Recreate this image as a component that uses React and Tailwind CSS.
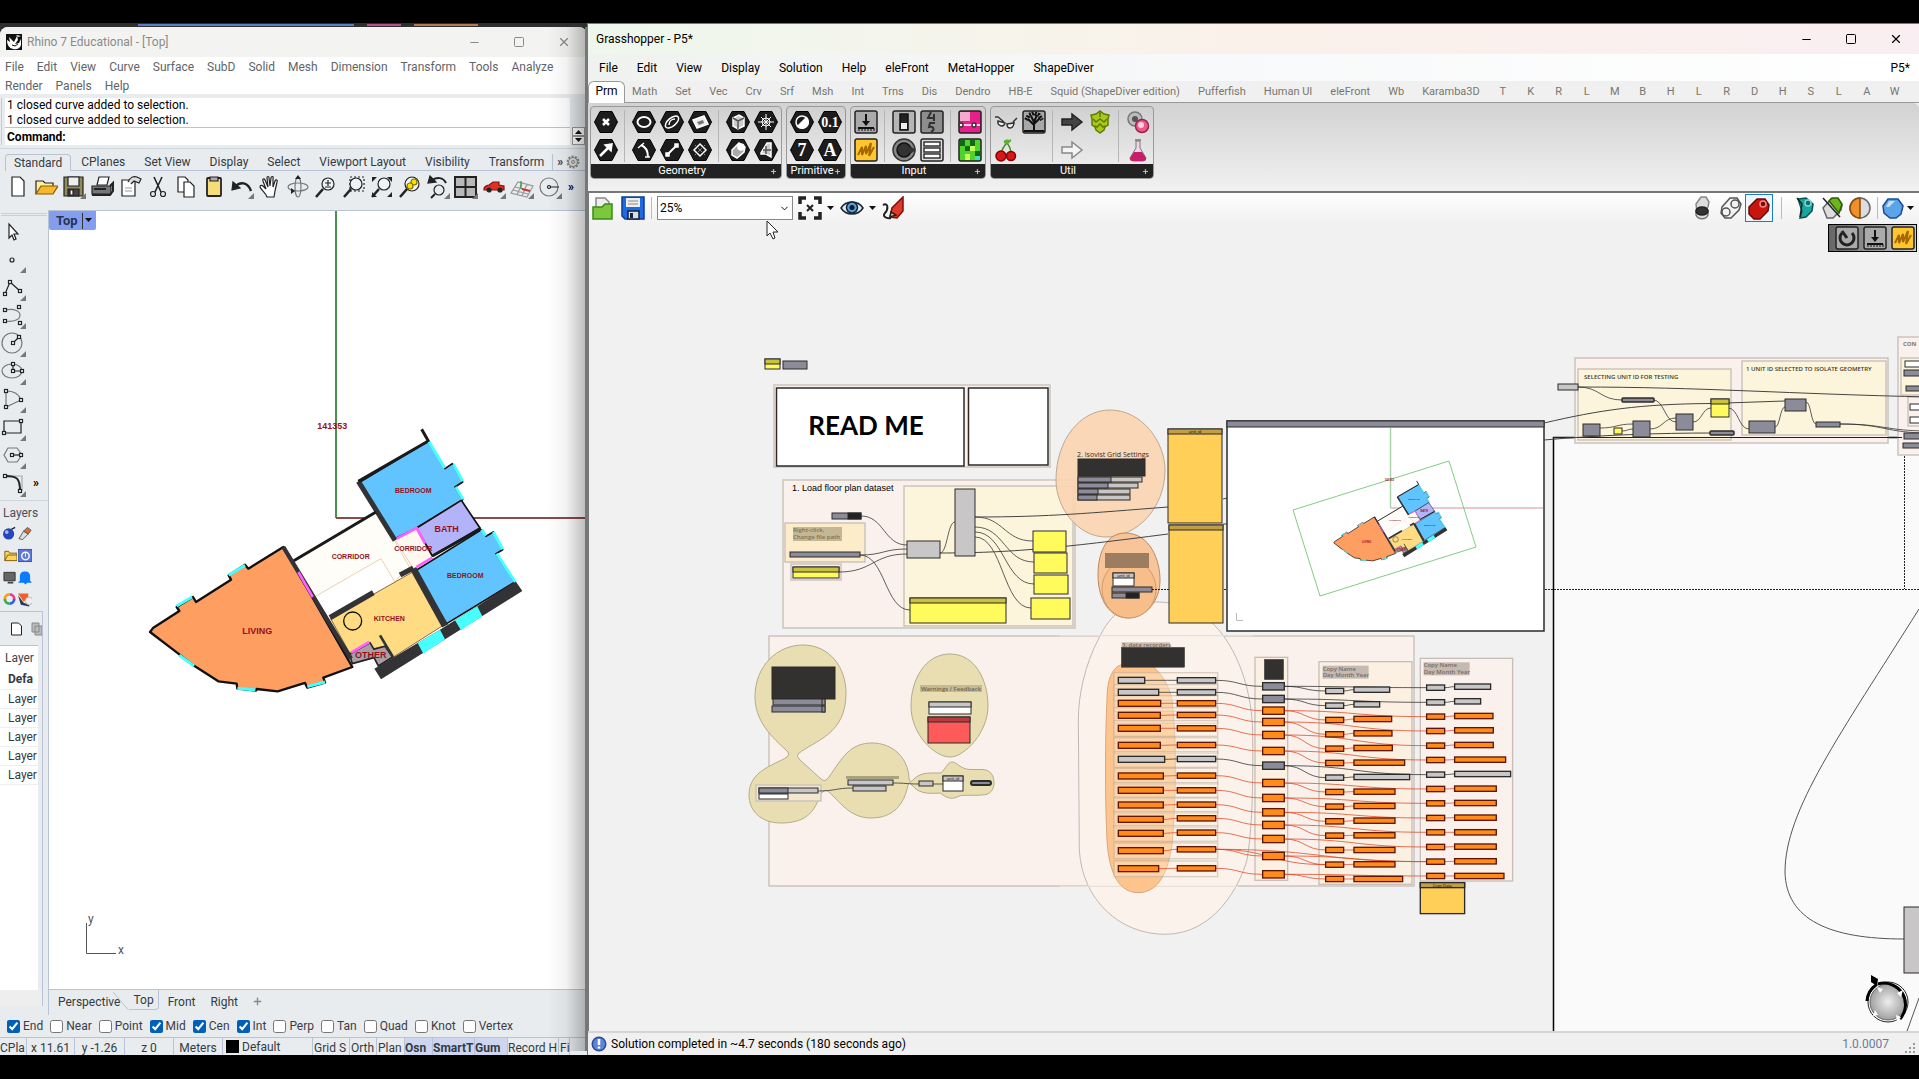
import React from "react";
import { Minus, Square, X, ChevronDown, Plus } from "lucide-react";

const RHINO_MENU = ["File", "Edit", "View", "Curve", "Surface", "SubD", "Solid", "Mesh", "Dimension", "Transform", "Tools", "Analyze", "Render", "Panels", "Help"];
const RHINO_TABS = ["CPlanes", "Set View", "Display", "Select", "Viewport Layout", "Visibility", "Transform"];
const OSNAPS = [
  ["End", true], ["Near", false], ["Point", false], ["Mid", true], ["Cen", true], ["Int", true],
  ["Perp", false], ["Tan", false], ["Quad", false], ["Knot", false], ["Vertex", false],
];
const GH_MENU = ["File", "Edit", "View", "Display", "Solution", "Help", "eleFront", "MetaHopper", "ShapeDiver"];
const GH_TABS = ["Math", "Set", "Vec", "Crv", "Srf", "Msh", "Int", "Trns", "Dis", "Dendro", "HB-E", "Squid (ShapeDiver edition)", "Pufferfish", "Human UI", "eleFront", "Wb", "Karamba3D"];
const GH_LETTERS = ["T", "K", "R", "L", "M", "B", "H", "L", "R", "D", "H", "S", "L", "A", "W"];

export default function App() {
  return (
    <div className="grid h-screen grid-cols-[587fr_1332fr] overflow-hidden bg-black pt-[23px] pb-6 font-['Roboto','Open_Sans',sans-serif] text-xs text-black">
      <RhinoWindow />
      <GrasshopperWindow />
    </div>
  );
}

/* ---------- Rhino ---------- */

function RhinoWindow() {
  return (
    <section className="relative flex min-h-0 min-w-0 flex-col overflow-hidden bg-[#2f2f2f]">
      <div className="flex h-1 shrink-0 items-center">
        <div className="ml-[138px] h-[2px] w-[216px] bg-[#5580c8]" />
        <div className="ml-[13px] h-[2px] w-[34px] bg-[#b8508a]" />
        <div className="ml-[13px] h-[2px] w-16 bg-[#b87850]" />
      </div>
      <div className="flex min-h-0 flex-1 flex-col overflow-hidden rounded-t-lg bg-[#e8ecef]">
        <header className="flex h-[30px] shrink-0 items-center bg-[#f3f4f2] pl-[6px] text-[#8a8a8a]">
          <RhinoLogo />
          <h1 className="ml-[5px]">Rhino 7 Educational - [Top]</h1>
          <div className="ml-auto flex items-center gap-8 pr-4">
            <button aria-label="Minimize"><Minus size={13} strokeWidth={2} /></button>
            <button aria-label="Maximize"><Square size={12} strokeWidth={2} /></button>
            <button aria-label="Close"><X size={14} strokeWidth={2} /></button>
          </div>
        </header>
        <nav className="flex h-[37px] shrink-0 flex-wrap content-start gap-x-[13px] bg-white pr-6 pl-[5px] text-[#5f6468]">
          {RHINO_MENU.map((m) => <button key={m} className="h-[19px]">{m}</button>)}
        </nav>
        <CommandLine />
        <StandardTabs />
        <div className="flex min-h-0 flex-1 pt-[5px]">
          <Sidebar />
          <div className="flex min-w-0 flex-1 flex-col">
            <Viewport />
            <div className="flex h-[26px] shrink-0 items-center border-t border-[#b9c3d6] pb-[2px] pl-[9px] text-[#333b42]">
              <button>Perspective</button>
              <svg width="17" height="20" className="-ml-2 self-start" fill="none" stroke="#b9c3d6"><path d="M1 2 16 19.500" /></svg>
              <button className="h-5 self-start rounded-br border-r border-b border-[#b9c3d6] px-1">Top</button>
              <button className="ml-[9px]">Front</button>
              <button className="ml-[15px]">Right</button>
              <button className="ml-[14px]" aria-label="New viewport"><Plus size={11} strokeWidth={3} color="#888" /></button>
            </div>
          </div>
        </div>
        <form className="flex h-[22px] shrink-0 items-center gap-[7px] pl-[7px] text-[#3c3c46]">
          {OSNAPS.map(([name, on]) => (
            <label key={name} className="flex items-center gap-[3px]">
              <input type="checkbox" defaultChecked={on} className="size-[13px] accent-[#005fb8]" />
              {name}
            </label>
          ))}
        </form>
        <StatusBar />
      </div>
      <div className="pointer-events-none absolute inset-y-1 right-0 w-10 border-r-2 border-[#777] bg-linear-to-r from-transparent via-black/5 to-black/25" />
    </section>
  );
}

function CommandLine() {
  return (
    <div className="flex h-[55px] shrink-0 border-b border-[#cfd6de] pt-1 pb-[3px]">
      <div className="mr-[3px] w-[2px] border-r border-[#c5ccd4]" />
      <div className="flex flex-1 flex-col bg-white">
        <div className="h-[29px] pl-[2px] leading-[15px]">
          <p>1 closed curve added to selection.</p>
          <p>1 closed curve added to selection.</p>
        </div>
        <div className="flex flex-1 items-center border-t border-[#b9c3d6] pl-[2px]">
          <label htmlFor="command" className="font-bold">Command:</label>
          <input id="command" className="min-w-0 flex-1 px-1 outline-none" />
        </div>
      </div>
      <div className="flex w-[17px] flex-col justify-end px-[2px]">
        <button aria-label="Previous" className="h-[9px] border border-[#999] bg-white"><Triangle up /></button>
        <button aria-label="Next" className="h-[9px] border border-[#999] bg-white"><Triangle /></button>
      </div>
    </div>
  );
}

function Triangle({ up }) {
  return (
    <svg width="7" height="5" className="mx-auto" fill="#111">
      <path d={up ? "M0 5 3.500 1 7 5z" : "M0 0H7L3.500 4z"} />
    </svg>
  );
}

function StandardTabs() {
  return (
    <div className="h-[56px] shrink-0 pt-[5px]">
      <div className="flex h-[17px] pl-[5px] text-[#333b42]">
        <button className="rounded-t border-x border-t border-[#b9c3d6] px-2">Standard</button>
        <div className="flex flex-1 items-center gap-[19px] border-b border-[#b9c3d6] pl-[10px]">
          {RHINO_TABS.map((t) => <button key={t} className="whitespace-nowrap">{t}</button>)}
          <button className="-ml-[11px] border-l border-[#b9c3d6] pl-1 font-bold" aria-label="More tabs">»</button>
          <button className="-ml-[16px]" aria-label="Options"><Gear /></button>
        </div>
      </div>
      <div className="flex h-[31px] items-center pl-1">
        {TOOLBAR.map(([name, art, flyout]) => (
          <button key={name} aria-label={name} className="flex w-7 shrink-0 justify-center">
            <svg width="24" height="24" viewBox="0 0 24 24" fill="none" stroke="#222" strokeWidth="1.2">
              {art}
              {flyout && <path d="M24 18v6h-6z" fill="#777" stroke="none" />}
            </svg>
          </button>
        ))}
        <button className="ml-1 font-bold" aria-label="More">»</button>
      </div>
    </div>
  );
}

const page = "M6 2h8l4 4v15H6z";
const lens = <><circle cx="14" cy="9" r="6" fill="#eef3f5" /><path d="m9 14-7 8" strokeWidth="2.500" /></>;
const TOOLBAR = [
  ["New", <path d={page} fill="#fff" />],
  ["Open", <><path d="M2 19V6h7l2 2h8v3" fill="#fff0a0" /><path d="M2 19 7 11h17l-5 8z" fill="#f5b82e" stroke="#8a5a00" /></>],
  ["Save", <><path d="M2 2h19v19H2z" fill="#8f8b5a" /><path d="M6 2h11v9H6z" fill="#eee" /><path d="M6 14h11v7H6z" fill="#444" /><path d="M8 15h3v5H8z" fill="#fff" /></>, true],
  ["Print", <><path d="M7 10 9 2h10l-2 8z" fill="#fff" /><path d="M2 11h19v8H2z" fill="#777" /><path d="M2 20h18l3-4V8l-3 3M4 14h12" strokeWidth="2" /></>],
  ["Properties", <><path d="M4 5h13v16H4z" fill="#fff" /><path d="M10 7c2-5 6-6 9-5l4 2-2 4-5-2-3 3" fill="#ddd" /><path d="M7 13h7M7 16h7" stroke="#999" /></>],
  ["Cut", <><path d="M8 2l7 15M16 2 9 17" strokeWidth="1.600" /><circle cx="7" cy="19" r="2.500" /><circle cx="17" cy="19" r="2.500" /></>],
  ["Copy", <><path d="M4 2h7l3 3v12H4z" fill="#fff" /><path d="M10 7h6l4 4v11H10z" fill="#fff" /></>],
  ["Paste", <><rect x="5" y="3" width="14" height="18" rx="1" fill="#f7dc7a" strokeWidth="1.800" /><path d="M8 2h8v4H8z" fill="#aaa" /></>],
  ["Undo", <><path d="M5 12c5-6 13-5 16 4" strokeWidth="2.500" /><path d="m2 15 1-8 7 6z" fill="#222" /></>, true],
  ["Pan", <path d="M9 22C8 18 3 15 2 12c0-2 2-2 3-1l3 3L5 6c-1-2 1-3 2-1l3 7-1-9c0-2 2-2 2 0l1 8 1-8c0-2 3-2 2 0v9l2-6c1-2 3-1 2 1l-2 9-1 6z" fill="#fff" />],
  ["Rotate", <><ellipse cx="12" cy="12" rx="10" ry="4" stroke="#777" /><ellipse cx="12" cy="12" rx="3" ry="10" stroke="#777" /><path d="m12 0 3 4H9zM9 16l-4-3v6z" fill="#222" stroke="none" /></>],
  ["Zoom", <>{lens}<path d="M11 8h6M14 5v6M11 12h6" /></>],
  ["Zoom window", <><path d="M8 2h14v14H8z" strokeDasharray="2 2" />{lens}</>],
  ["Zoom extents", <>{lens}<path d="M2 7V2h5zM17 2h5v5zM22 17v5h-5zM2 17v5h5z" fill="#222" stroke="none" /></>],
  ["Zoom selected", <><circle cx="14" cy="9" r="7" fill="#eef3f5" /><path d="m9 14-7 8" strokeWidth="2.500" /><circle cx="16" cy="7" r="3" fill="#ffe100" stroke="#806d00" /><circle cx="12" cy="11" r="3" fill="#ffe100" stroke="#806d00" /></>],
  ["Undo view", <><circle cx="13" cy="15" r="5" /><path d="m9 19-4 4" strokeWidth="2" /><path d="M6 5c5-3 11-3 14 3" strokeWidth="2" /><path d="M2 8 4 1l6 6z" fill="#222" /></>, true],
  ["4 view", <><path d="M1 2h21v20H1z" fill="#b8b8b8" strokeWidth="2" /><path d="M11.500 2v20M1 12h21" strokeWidth="2" /></>, true],
  ["Car", <><path d="M2 14c0-3 2-3 5-4l4-3h6v3l5 1v4H2z" fill="#e03020" stroke="#8a1010" /><circle cx="7" cy="15" r="2" fill="#222" /><circle cx="18" cy="15" r="2" fill="#222" /></>, true],
  ["CPlane", <><path d="m1 18 7-11 15 4-6 11zM5 12l15 4M3 15l15 4M12 8 7 20M17 9l-5 12" stroke="#999" /><path d="M11 14V6" stroke="#2a9a30" /><path d="m12 14 8 2" stroke="#c33" strokeWidth="2" /></>, true],
  ["Circle", <><circle cx="11" cy="12" r="9" stroke="#777" /><path d="M12 12h9" /><circle cx="11" cy="12" r="1.500" /></>, true],
];

const SIDE_TOOLS = [
  ["Select", <path d="M9 5v14l3-3 2 5 2-1-2-5h4z" fill="#fff" />, false],
  ["Point", <circle cx="12" cy="13" r="2" />, true],
  ["Polyline", <><path d="m5 19 5-12 10 9" /><Dots at={[[5, 19], [10, 7], [20, 16]]} /></>, true],
  ["Curve", <><path d="M5 7c20-4 20 14 0 11" stroke="#777" /><Dots at={[[5, 7], [19, 4], [5, 18], [20, 20]]} /></>, true],
  ["Circle", <><circle cx="12" cy="12" r="10" stroke="#777" /><path d="m13 12 6-6" /><Dots at={[[13, 12], [19, 6]]} /></>, true],
  ["Ellipse", <><ellipse cx="12" cy="12" rx="10" ry="7" stroke="#777" /><path d="M13 5v7h9" /><Dots at={[[13, 5], [13, 12], [22, 12]]} /></>, true],
  ["Arc", <><path d="M6 4c8 0 13 3 15 9L6 20z" stroke="#777" /><Dots at={[[6, 4], [21, 13], [6, 20]]} /></>, true],
  ["Rectangle", <><path d="M4 6h17v12H4z" /><Dots at={[[21, 6], [4, 18]]} /></>, true],
  ["Polygon", <><path d="M8 5h9l5 7-5 7H8l-4-7z" stroke="#777" /><path d="M12 12h9" /><Dots at={[[12, 12], [21, 12]]} /></>, true],
  ["Fillet", <><path d="M5 5h17v15" stroke="#aaa" /><path d="M5 5c12 0 15 2 15 15" strokeWidth="2" /><Dots at={[[5, 5], [20, 20]]} /></>, true],
];

function Dots({ at }) {
  return at.map(([x, y]) => <rect key={`${x}-${y}`} x={x - 1.5} y={y - 1.5} width="3" height="3" fill="#fff" />);
}

function Sidebar() {
  return (
    <aside className="flex w-[49px] shrink-0 flex-col border-r border-[#b9c3d6]">
      <div className="mx-px mt-[3px] h-[3px] border-y border-[#c5cfdd]" />
      <div className="relative pt-[3px]">
        {SIDE_TOOLS.map(([name, art, flyout]) => (
          <button key={name} aria-label={name} className="block h-7 w-[27px]">
            <svg width="27" height="28" viewBox="0 0 27 28" fill="none" stroke="#222" strokeWidth="1.200">
              {art}
              {flyout && <path d="M26 20v6h-6z" fill="#777" stroke="none" />}
            </svg>
          </button>
        ))}
        <button className="absolute right-[9px] bottom-2 font-bold" aria-label="More tools">»</button>
      </div>
      <h2 className="mt-px h-[22px] border-t border-[#cfd6de] pt-1 pl-[3px] text-[#4c4c56]">Layers</h2>
      <div className="grid h-[89px] w-8 grid-cols-2 gap-x-px pl-[3px]">
        {PANEL_ICONS.map(([name, art]) => (
          <button key={name} aria-label={name} className="flex items-center">
            <svg width="15" height="15" viewBox="0 0 15 15">{art}</svg>
          </button>
        ))}
      </div>
      <div className="mb-[9px] flex min-h-0 w-[43px] flex-1 flex-col border-t border-r border-[#b9c3d6]">
        <div className="flex h-[33px] items-center gap-2 overflow-hidden pl-[10px]">
          <svg width="13" height="14" className="shrink-0" fill="#fff" stroke="#222"><path d="M1.500 1h7l3 3v9h-10z" /></svg>
          <svg width="13" height="14" className="shrink-0" fill="#bbb" stroke="#888"><path d="M1 1h7v9H1zM4 4h7v9H4z" /></svg>
        </div>
        <div className="mr-1 min-h-0 flex-1 overflow-hidden border-t border-[#b9c3d6] bg-white">
          <table className="w-full">
            <thead>
              <tr className="h-6"><th className="pl-[5px] text-left font-normal text-[#444]">Layer</th></tr>
            </thead>
            <tbody className="text-[#333b42]">
              <tr className="h-[19px] border-b border-[#eee]"><td className="pl-2 font-bold">Defa</td></tr>
              {[1, 2, 3, 4, 5].map((n) => (
                <tr key={n} className="h-[19px] border-b border-[#eee]"><td className="pl-2">Layer</td></tr>
              ))}
            </tbody>
          </table>
        </div>
        <div className="h-4 bg-[#eeeeee]" />
      </div>
    </aside>
  );
}

const PANEL_ICONS = [
  ["Properties", <><circle cx="6" cy="8" r="6" fill="#2746b8" /><circle cx="4" cy="6" r="2" fill="#a8b8ff" /><path d="m9 3 4-2" stroke="#222" strokeWidth="1.500" /></>],
  ["Layers", <><path d="m1 13 5-8 5 3-6 6z" fill="#ddd" stroke="#555" /><path d="m6 5 4-4 4 3-3 4z" fill="#e8682a" stroke="#555" /></>],
  ["Library", <><path d="M2 13V3h4l1 2h8v8z" fill="#ffd45a" stroke="#7a5a10" /><path d="m2 13 3-6h10" fill="none" stroke="#7a5a10" /></>],
  ["Help", <><rect x="0" y="1" width="15" height="13" fill="#5c78d8" stroke="#3850a0" /><circle cx="8" cy="8" r="4" fill="none" stroke="#fff" strokeWidth="1.500" /><path d="M8 5v4" stroke="#fff" /></>],
  ["Display", <><path d="M1 2h12v9H1z" fill="#666" stroke="#333" /><path d="M5 13h6" stroke="#444" strokeWidth="2" /></>],
  ["Notifications", <path d="M8 1c3 0 5 2 5 5v5l2 2H0l2-2V6c0-3 2-5 5-5zM6 13h4l-2 2z" fill="#0a7bff" />],
  ["Materials", <><path d="M7 2a5 5 0 0 1 5 5" stroke="#e04090" strokeWidth="3" fill="none" /><path d="M7 2a5 5 0 0 0-5 5" stroke="#f0a020" strokeWidth="3" fill="none" /><path d="M2 7a5 5 0 0 0 5 5" stroke="#30b050" strokeWidth="3" fill="none" /><path d="M12 7a5 5 0 0 1-5 5" stroke="#3060e0" strokeWidth="3" fill="none" /></>],
  ["Textures", <><path d="M0 1h11v5L6 10z" fill="#f0602a" /><path d="m0 3 6 8 6 2v2L3 13z" fill="#27385a" /><circle cx="12" cy="9" r="4" fill="#eee" stroke="#bbb" /></>],
];

function Viewport() {
  return (
    <div className="relative min-h-0 flex-1 overflow-hidden border-t border-[#b9c3d6] bg-white">
      <button className="absolute top-0 left-0 z-10 flex h-[19px] w-[47px] items-center justify-between rounded-b-xs bg-[#839df0] pr-1 pl-[7px] text-[13px] font-bold text-[#2a3350]">
        Top
        <span className="flex h-4 items-center border-l border-[#333] pl-[2px]"><Triangle /></span>
      </button>
      <svg className="h-full w-full">
        <g transform="translate(-49 -211)">
          <path d="M336 211V518" stroke="#4b9150" strokeWidth="2" />
          <path d="M336 518H590" stroke="#8c4a4a" strokeWidth="2" />
          <g transform="translate(336 518) scale(.3333)"><FloorPlan /></g>
          <path d="M86.500 923V953.500H116" fill="none" stroke="#555" />
          <text x="88" y="923" className="fill-[#555] text-xs">y</text>
          <text x="118" y="954" className="fill-[#555] text-xs">x</text>
        </g>
      </svg>
    </div>
  );
}

// Drawn in model units, with the world origin at 648,353
function FloorPlan() {
  const labels = [
    ["141353", 637, 87], ["BEDROOM", 880, 279], ["CORRIDOR", 692, 477], ["CORRIDOR", 880, 453], ["BATH", 980, 394],
    ["BEDROOM", 1036, 534], ["KITCHEN", 808, 663], ["LIVING", 412, 701], ["OTHER", 752, 773],
  ];
  return (
    <g transform="translate(-648 -353)" strokeLinejoin="round">
      <path d="M583 590 783 475 825 545 755 580 620 650z" fill="#fff" />
      <path d="M520 482 768 335 822 418 868 500 845 520 825 545 783 475 583 590z" fill="#fffdf8" stroke="#e0b890" strokeWidth="2" />
      <path d="M825 417 890 383 937 470 880 505z" fill="#fff8ee" stroke="#e0b890" strokeWidth="2" />
      <path d="M490 440 385 505 375 493 326 525 333 538 228 605 219 590 170 620 178 632 100 682 90 695 175 760 220 795 295 843 350 850 352 865 408 871 410 866 473 873 555 848 562 862 615 847 610 832 697 800z" fill="#ff9e61" stroke="#111" strokeWidth="7" />
      <path d="M720 245 925 122 975 205 997 190 1028 245 1005 260 1028 298 890 383 825 415z" fill="#61c4ff" stroke="#111" strokeWidth="5" />
      <path d="M890 383 1024 300 1080 383 937 467z" fill="#b3b3fa" stroke="#111" strokeWidth="5" />
      <path d="M885 512 1085 388 1098 408 1120 395 1148 448 1128 460 1185 545 980 670z" fill="#61c4ff" stroke="#111" strokeWidth="5" />
      <path d="M632 655 878 515 970 675 820 770 790 738 760 745 745 725 690 760z" fill="#ffdb83" stroke="#8a6a40" strokeWidth="3" />
      <path d="M688 762 750 727 762 747 795 738 818 770 775 797 762 772 697 790z" fill="#a79fa5" stroke="#222" strokeWidth="5" />
      <g stroke="#333336" fill="none">
        <path d="M715 243 825 420" strokeWidth="15" />
        <path d="M715 243 925 122 905 87M520 482 768 335M937 467 1083 385" strokeWidth="9" stroke="#1a1a1a" />
        <path d="M490 440 635 680 693 775" strokeWidth="13" />
        <path d="M630 652 760 577M840 524 880 503" strokeWidth="16" />
        <path d="M880 505 975 677" strokeWidth="20" />
        <path d="M780 705 820 772" strokeWidth="8" />
      </g>
      <path d="M1187 543 1207 572 783 837 763 805 893 728 960 688 1072 618z" fill="#333336" />
      <g fill="#47ffff">
        <path d="M1072 618 1087 648 1023 690 1005 660zM960 688 975 717 910 760 893 728z" />
      </g>
      <g stroke="#47ffff" strokeWidth="9">
        <path d="M326 525 375 495M170 617 216 590M178 765 222 797M352 864 406 869M562 859 615 845" />
        <path d="M927 124 974 203M1000 192 1028 243M1007 260 1029 297M1085 388 1098 406M1120 395 1148 447M1130 460 1186 545" />
      </g>
      <g stroke="#ff60ff" strokeWidth="8">
        <path d="M535 515 578 590M830 415 890 383 915 430M890 500 937 472M693 757 748 725" fill="none" />
      </g>
      <circle cx="698" cy="662" r="27" fill="none" stroke="#111" strokeWidth="4" />
      {labels.map(([t, x, y]) => (
        <text key={`${t}${x}`} x={x} y={y} textAnchor="middle" className={`fill-[#98101c] font-['Liberation_Sans',sans-serif] font-bold ${t.length > 6 ? "text-[21px]" : "text-[27px]"}`}>{t}</text>
      ))}
    </g>
  );
}

function StatusBar() {
  const toggle = "bg-[#cdd6ee] font-bold";
  return (
    <footer className="flex h-[18px] shrink-0 overflow-hidden border-t border-[#b9c3d6] leading-5 whitespace-nowrap text-[#333b42] *:shrink-0 *:border-r *:border-[#b9c3d6] *:text-left">
      <button aria-label="CPlane" className="w-[27px]">CPla</button>
      <span className="w-12 text-center!">x 11.61</span>
      <span className="w-[50px] text-center!">y -1.26</span>
      <span className="w-[49px] text-center!">z 0</span>
      <span className="w-[49px] text-center!">Meters</span>
      <button className="flex w-[90px] items-center pl-[3px]"><span className="mr-[3px] size-[13px] bg-black" />Default</button>
      <button aria-label="Grid Snap" className="w-[37px] pl-px">Grid S</button>
      <button aria-label="Ortho" className="w-[27px] pl-px">Orth</button>
      <button aria-label="Planar" className="w-7 pl-px">Plan</button>
      <button aria-label="Osnap" className={`w-7 ${toggle}`}>Osn</button>
      <button aria-label="SmartTrack" className={`w-[42px] ${toggle}`}>SmartT</button>
      <button aria-label="Gumball" className={`w-[33px] ${toggle}`}>Gum</button>
      <button aria-label="Record History" className="w-[51px]">Record H</button>
      <button aria-label="Filter" className="w-[11px] pl-px">Fi</button>
    </footer>
  );
}

function RhinoLogo() {
  return (
    <svg width="16" height="16" viewBox="0 0 16 16">
      <rect width="16" height="16" fill="#111" />
      <path d="M1 6 4 8 3 3l5 5 3-6 1 4-3 4 4-1 2-4v6c-1 4-5 5-8 4-4-1-6-4-6-9zM10 1l5 1-3 1z" fill="#fff" />
      <path d="m6 11 3 1 3-2" stroke="#111" fill="none" />
    </svg>
  );
}

function Gear() {
  return (
    <svg width="14" height="14" viewBox="0 0 14 14" fill="#ddd" stroke="#888">
      <circle cx="7" cy="7" r="5.500" strokeDasharray="2 1.400" strokeWidth="2" />
      <circle cx="7" cy="7" r="4.500" /><circle cx="7" cy="7" r="1.500" />
    </svg>
  );
}

/* ---------- Grasshopper ---------- */

function GrasshopperWindow() {
  return (
    <section className="relative flex min-h-0 min-w-0 flex-col overflow-hidden border-t border-l border-[#777] bg-[#f0f0f0]">
      <header className="flex h-[30px] shrink-0 items-center bg-linear-to-r from-[#eef7ec] via-[#faf1ea] to-[#f9eff2] pl-2">
        <h1>Grasshopper - P5*</h1>
        <div className="ml-auto flex items-center gap-8 pr-4">
          <button aria-label="Minimize"><Minus size={13} strokeWidth={2} /></button>
          <button aria-label="Maximize"><Square size={12} strokeWidth={2} /></button>
          <button aria-label="Close"><X size={14} strokeWidth={2} /></button>
        </div>
      </header>
      <nav className="flex h-[27px] shrink-0 items-center gap-[19px] bg-linear-to-r from-[#f0f2f0] via-[#f8f9fa] to-white pr-[9px] pl-[11px]">
        {GH_MENU.map((m) => <button key={m}>{m}</button>)}
        <span className="ml-auto">P5*</span>
      </nav>
      <div className="flex h-[22px] shrink-0 items-center text-[11px] text-[#77776f]">
        <button className="h-full w-[37px] rounded-t-md border-x border-t border-[#999] bg-white pb-1 text-xs text-black">Prm</button>
        <div className="flex h-full min-w-0 flex-1 items-center gap-[18px] border-b border-[#999] pt-px pl-[7px] whitespace-nowrap">
          {GH_TABS.map((t) => <button key={t}>{t}</button>)}
          <div className="-ml-[9px] flex">
            {GH_LETTERS.map((t, i) => <button key={i} className="w-7">{t}</button>)}
          </div>
        </div>
      </div>
      <div className="flex h-[90px] shrink-0 items-start gap-1 rounded-tr-md border-b-2 border-[#777] bg-linear-to-b from-[#d2d2d2] to-[#f1f1f1] pt-[3px] pl-[2px]">
        <RibbonPanel name="Geometry" groups={GEOMETRY} />
        <RibbonPanel name="Primitive" groups={PRIMITIVE} />
        <RibbonPanel name="Input" groups={INPUT} />
        <RibbonPanel name="Util" groups={UTIL} />
      </div>
      <CanvasToolbar />
      <Canvas />
      <footer className="flex h-6 shrink-0 items-center border-t-2 border-[#d5d5d5] pr-[2px] pl-[3px]">
        <svg width="16" height="16" className="mr-1"><circle cx="8" cy="8" r="7.500" fill="#2a4a98" /><circle cx="8" cy="8" r="6" fill="#5f86d6" /><path d="M8 3v6M8 10.500v2" stroke="#fff" strokeWidth="2.500" /></svg>
        <span>Solution completed in ~4.7 seconds (180 seconds ago)</span>
        <span className="ml-auto text-[#6a7a9c]">1.0.0007</span>
        <svg width="12" height="12" className="ml-4 self-end" fill="#999"><path d="M8 0h2v2H8zM4 4h2v2H4zM8 4h2v2H8zM0 8h2v2H0zM4 8h2v2H4zM8 8h2v2H8z" /></svg>
      </footer>
      <svg width="14" height="20" viewBox="0 0 14 20" className="pointer-events-none absolute top-[196px] left-[178px]">
        <path d="M1 1v15l3-3 3 6 2-1-2-6h5z" fill="#fff" stroke="#222" />
      </svg>
    </section>
  );
}

function RibbonPanel({ name, groups }) {
  return (
    <div className="overflow-hidden rounded border border-[#999] bg-linear-to-b from-[#d0d0d0] to-[#f2f2f2]">
      <div className="flex px-[3px] pt-[3px] pb-[2px]">
        {groups.map((items, i) => (
          <React.Fragment key={i}>
            {i > 0 && <div className="mr-[7px] ml-[6px] w-px bg-[#b5b5b5]" />}
            <div className="grid grid-flow-col grid-rows-2 gap-x-1 gap-y-1">
              {items.map((item, j) => item
                ? <button key={j} aria-label={item[0]} className="size-6"><svg width="24" height="24" viewBox="0 0 24 24" fill="none" stroke="#fff" strokeWidth="1.500">{item[1]}</svg></button>
                : <span key={j} />)}
            </div>
          </React.Fragment>
        ))}
      </div>
      <div className="relative flex h-[14px] items-center justify-center bg-[#222] pr-2 text-[11px] text-white">
        {name}
        <span className="absolute right-1 text-[#bbb]"><Plus size={7} strokeWidth={4} /></span>
      </div>
    </div>
  );
}

function Hex({ children }) {
  return <><path d="M6 1.500h12L23.500 12 18 22.500H6L.5 12z" fill="#1c1c1c" stroke="#000" strokeWidth="1" />{children}</>;
}

function Tile({ fill = "#aaa", children }) {
  return <><rect x="1" y="1" width="22" height="22" rx="2" fill={fill} stroke="#222" strokeWidth="1.500" />{children}</>;
}

function Scribble() {
  return <path d="M4 17 8 9v8l4-9v8l5-11-2 13 5-9" stroke="#a86800" strokeWidth="2" fill="none" />;
}

const GEOMETRY = [
  [
    ["Point", <Hex><path d="m9 9 6 6M15 9l-6 6" strokeWidth="2.500" /></Hex>],
    ["Vector", <Hex><path d="m6 18 9-9" strokeWidth="2.500" /><path d="m11 7 7-1-1 7z" fill="#fff" /></Hex>],
  ],
  [
    ["Circle", <Hex><ellipse cx="12" cy="12" rx="6.500" ry="5" strokeWidth="2" /></Hex>],
    ["Circular arc", <Hex><path d="M9 7c5 2 7 6 7 12" strokeWidth="2" /><path d="m6 10 6-5M13 19h5" /></Hex>],
    ["Curve", <Hex><ellipse cx="12" cy="12" rx="8" ry="4" transform="rotate(-40 12 12)" /><path d="M9 15c0-4 3-6 6-6" /></Hex>],
    ["Line", <Hex><path d="m7 17 10-10" strokeWidth="2" /><path d="M6 15h3v3H6zM15 6h3v3h-3z" fill="#fff" /></Hex>],
    ["Plane", <Hex><path d="m5 10 11-4 4 8-11 4z" fill="#eee" /><path d="m9 12 6-2 1 3-5 2z" fill="#777" stroke="none" /></Hex>],
    ["Rectangle", <Hex><path d="m12 6 6 6-6 6-6-6z" /><path d="M7 7l10 10M7 17 17 7" stroke="#888" strokeWidth="1" /></Hex>],
  ],
  [
    ["Box", <Hex><path d="m7 8 6-3 5 3v8l-6 3-5-3z" fill="#ccc" /><path d="m7 8 5 3v8M12 11l6-3" stroke="#555" /></Hex>],
    ["Brep", <Hex><path d="m6 12 7-7 6 4-1 5-7 6-5-3z" fill="#aaa" /><circle cx="15" cy="9" r="3" fill="#fff" /></Hex>],
    ["Mesh", <Hex><path d="M12 4v16M4 12h16M7 7l10 10M7 17 17 7" strokeWidth="1" /><circle cx="12" cy="12" r="4" strokeWidth="1" /></Hex>],
    ["Surface", <Hex><path d="m7 15 6-10h4v14l-5-3H7z" fill="#ccc" /><path d="M12 8v8M9 12h8" stroke="#555" /></Hex>],
  ],
];
const PRIMITIVE = [
  [
    ["Boolean", <Hex><circle cx="12" cy="12" r="6" /><path d="M16.500 7.500a6 6 0 0 1-9 9z" fill="#fff" /></Hex>],
    ["Integer", <Hex><text x="12" y="18" textAnchor="middle" fill="#fff" stroke="none" className="[font-family:'Liberation_Serif',serif] text-[18px] font-bold">7</text></Hex>],
    ["Number", <Hex><text x="12" y="17" textAnchor="middle" fill="#fff" stroke="none" className="[font-family:'Liberation_Serif',serif] text-sm font-bold">0.1</text></Hex>],
    ["Text", <Hex><text x="12" y="18" textAnchor="middle" fill="#fff" stroke="none" className="[font-family:'Liberation_Serif',serif] text-[18px] font-bold">A</text></Hex>],
  ],
];
const INPUT = [
  [
    ["Button", <Tile><path d="M12 4v9M4 18h16" stroke="#111" strokeWidth="2" /><path d="M5 18v3M8 18v3M11 18v3M14 18v3M17 18v3M20 18v3" stroke="#111" strokeWidth="1" /><path d="m8 11 4 5 4-5z" fill="#111" stroke="none" /></Tile>],
    ["Panel scribble", <Tile fill="#ffc62e"><Scribble /></Tile>],
  ],
  [
    ["Toggle", <Tile fill="#b5b5b5"><path d="M8 4h8v16H8z" fill="#222" stroke="#111" /><path d="M9 13h6v6H9z" fill="#eee" stroke="none" /></Tile>],
    ["Knob", <><circle cx="12" cy="12" r="11" fill="#888" stroke="#333" /><circle cx="12" cy="12" r="7" fill="#333" stroke="#111" /><path d="m24 12-6-4v8z" fill="#333" stroke="none" /></>],
    ["Digits", <Tile fill="#8d8d8d"><path d="M11 2 8 8h6M14 4v7M15 13h-5l-1 4c5-1 6 3 2 5" stroke="#333" strokeWidth="2" /></Tile>],
    ["Value list", <Tile fill="#ddd"><path d="M4 4h16v4H4zM4 10h16v4H4zM4 16h16v4H4z" stroke="#333" fill="#fff" /></Tile>],
  ],
  [
    ["Gradient", <Tile fill="#e81f8a"><path d="M2 2h10v9H2z" fill="#f7a8cf" stroke="none" /><path d="M2 15h20" stroke="#fff" /><circle cx="16" cy="15" r="2" fill="#fff" stroke="#333" /><circle cx="3" cy="15" r="2" fill="#fff" stroke="#333" /></Tile>],
    ["Image", <Tile fill="#4ed32a"><path d="M2 2h5v6H2zM12 2h5v6h-5zM7 8h5v5H7zM17 13h5v5h-5z" fill="#0f6a12" stroke="none" /><path d="M12 8h5v5h-5zM7 16h5v6H7z" fill="#c4ff5a" stroke="none" /><path d="M17 18h5v4h-5z" fill="#3fe0c0" stroke="none" /></Tile>],
  ],
];
const UTIL = [
  [
    ["Glasses", <path d="M1 7h3l6 5M23 8l-4 4M4 11c-1 5 6 7 7 2zM13 14c0 5 6 6 7-1z" stroke="#333" fill="#f4f4f4" />],
    ["Cherries", <><path d="M7 15C9 9 11 5 17 2M17 16c0-6-3-10-5-12" stroke="#4a8a20" /><path d="M10 5c-1-4 3-4 7-3-1 4-5 5-7 3z" fill="#5eb030" stroke="none" /><circle cx="7" cy="18" r="5" fill="#d81818" stroke="#800" /><circle cx="17" cy="18" r="4.500" fill="#d81818" stroke="#800" /></>],
    ["Tree", <Tile fill="#a8a8a8"><path d="M12 21v-9M12 15 6 9M12 14l6-6M12 12 9 6M12 12l3-7" stroke="#111" strokeWidth="2" /><path d="M4 10 7 5l5-2 5 2 3 5" stroke="#111" strokeDasharray="2 1" strokeWidth="4" /><path d="M2 21h20" stroke="#111" strokeWidth="2" /></Tile>],
    null,
  ],
  [
    ["Relay", <path d="M2 9h10V4l10 8-10 8v-5H2z" fill="#444" stroke="#222" />],
    ["Data", <path d="M2 9h10V4l10 8-10 8v-5H2z" fill="#f4f4f4" stroke="#888" />],
    ["Hops", <><path d="m12 23-4-3-1-3-3-2V9L3 5l5-1 4-3 4 3 5 1-1 4v6l-3 2-1 3z" fill="#a8c81c" stroke="#5f7c00" /><path d="m5 9 3 3 4-3 4 3 3-3M7 16l2 1 3-3 3 3 2-1M12 1v6" stroke="#5f7c00" /></>],
    null,
  ],
  [
    ["Cluster", <><circle cx="9" cy="9" r="7" fill="#bbb" stroke="#777" /><circle cx="9" cy="9" r="3" fill="#555" stroke="none" /><circle cx="16" cy="16" r="6.500" fill="#ec5a8c" stroke="#a02050" /><circle cx="15" cy="15" r="3" fill="#fbd0e0" stroke="none" /></>],
    ["Flask", <><path d="M10 3v7L4 20q0 3 3 3h10q3 0 3-3l-6-10V3z" fill="#f4d5e4" stroke="#777" strokeWidth="1" /><path d="m8 14-4 6q0 3 3 3h10q3 0 3-3l-4-6z" fill="#c81e6a" stroke="none" /><path d="M9 2h6" stroke="#777" /></>],
  ],
];

function ToolIcon({ name, children, className = "w-6" }) {
  return (
    <button aria-label={name} className={`flex shrink-0 justify-center ${className}`}>
      <svg width="24" height="24" viewBox="0 0 24 24" fill="none" stroke="#222" strokeWidth="1.500">{children}</svg>
    </button>
  );
}

function CanvasToolbar() {
  return (
    <div className="flex h-[30px] shrink-0 items-center border-l border-[#777] bg-linear-to-b from-white to-[#f1f1f1] pr-[5px] pl-[2px]">
      <ToolIcon name="Open"><path d="M5 2h9l4 4v8H5z" fill="#eee" stroke="#888" /><path d="M2 11h9l3-3h7v15H2z" fill="#7cc83c" stroke="#3a8a18" /></ToolIcon>
      <ToolIcon name="Save" className="ml-[6px] w-6"><path d="M1 1h22v22H4l-3-3z" fill="#1f6ae0" stroke="#0d3c96" /><path d="M5 2h14v9H5z" fill="#eee" stroke="none" /><path d="M7 15h11v8H7z" fill="#ddd" stroke="#124" /><path d="M9 17h3v5H9z" fill="#124" stroke="none" /><path d="M7 5h10M7 8h10" stroke="#aaa" /></ToolIcon>
      <div className="mr-[5px] ml-[6px] h-[22px] w-px bg-[#bbb]" />
      <div className="relative">
        <select aria-label="Zoom" defaultValue="25%" className="block h-6 w-[136px] appearance-none border border-[#888] bg-white pl-[2px]">
          <option>25%</option>
          <option>50%</option>
          <option>100%</option>
        </select>
        <ChevronDown size={11} className="pointer-events-none absolute top-[7px] right-[3px]" />
      </div>
      <ToolIcon name="Zoom extents" className="ml-[5px] w-6"><path d="M2 8V2h6M16 2h6v6M22 16v6h-6M8 22H2v-6" strokeWidth="3.500" /><path d="m9 9 6 6M15 9l-6 6" strokeWidth="2" /></ToolIcon>
      <span className="mr-[6px] ml-[5px]"><Triangle /></span>
      <ToolIcon name="Preview"><path d="M1 12C6 4 18 4 23 12 18 20 6 20 1 12z" fill="#d8ecf6" strokeWidth="1.500" /><circle cx="12" cy="11.500" r="5.500" fill="#4aa6dc" stroke="#124" /><circle cx="12" cy="11.500" r="2.500" fill="#111" stroke="none" /></ToolIcon>
      <span className="mx-[5px]"><Triangle /></span>
      <ToolIcon name="Sketch"><path d="M2 9c6-3 5 5 2 8s1 6 6 5" strokeWidth="2" /><path d="m9 21 2-9 11-11v14l-6 7z" fill="#e03a2a" stroke="#801008" /><path d="m9 21 1-5 5 3z" fill="#f0c89a" /></ToolIcon>
      <div className="ml-auto flex items-center">
        <ToolIcon name="No preview" className="w-[29px]"><path d="m6 8 5-7h5l3 5-1 5-5 5H7z" fill="#ddd" stroke="#888" /><path d="M6 15v4c2 5 10 5 12 0v-4z" fill="#ddd" stroke="#777" /><ellipse cx="12" cy="15" rx="6" ry="4" fill="#333" /></ToolIcon>
        <ToolIcon name="Wireframe" className="w-[29px]"><path d="m3 11 8-9h7l4 6-2 6-8 8H6l-4-5z" fill="#f4f4f4" stroke="#555" /><circle cx="16" cy="8" r="4" stroke="#555" /><circle cx="7" cy="16" r="4" stroke="#555" /></ToolIcon>
        <ToolIcon name="Shaded" className="h-7 w-7 items-center border border-[#1a80c4] bg-[#eef5fb]"><path d="m2 11 8-8h8l4 6-1 6-8 8H7l-5-5z" fill="#c8160f" stroke="#6a0804" /><circle cx="16" cy="8" r="3" fill="#7d0a06" stroke="#e88" /></ToolIcon>
        <div className="mr-2 ml-2 h-[22px] w-px bg-[#bbb]" />
        <ToolIcon name="Document preview" className="w-7"><path d="m6 3 8-1 7 6-1 7-6 6-6 1 2-7z" fill="#1aa6a0" stroke="#0a5450" /><circle cx="16" cy="7" r="3" fill="#0c6c68" stroke="#7cd8d4" /><path d="m5 2 5 6-2 13" stroke="#222" /></ToolIcon>
        <ToolIcon name="Selected preview" className="w-7"><path d="m3 12 8-9h6l5 6-1 5-8 8H7z" fill="#ddd" stroke="#666" /><path d="m9 5 3-3h6l4 6-3 9z" fill="#6cb51c" stroke="#2f5c05" /><path d="m3 2 17 19" /></ToolIcon>
        <ToolIcon name="Mesh quality" className="w-7"><circle cx="12" cy="12" r="10" fill="#ddd" stroke="#666" /><path d="M12 2a10 10 0 0 0 0 20z" fill="#f0902a" stroke="#8a4a0a" /></ToolIcon>
        <div className="mr-px ml-[3px] h-[22px] w-px bg-[#bbb]" />
        <ToolIcon name="Settings" className="w-7"><path d="M7 3h10l5 7-2 8-5 4H9l-6-5-1-7z" fill="#5ca4e8" stroke="#1c4c98" /><path d="M8 5h6l-6 6H5z" fill="#c4e2fc" stroke="none" /></ToolIcon>
        <Triangle />
      </div>
    </div>
  );
}

/* ---------- Canvas ---------- */

const INK = "#2b2b2b";
const TINY = "font-['Open_Sans',sans-serif] text-[4px]";

function Wire({ from: [x1, y1], to: [x2, y2], stroke = INK, width = 1, dash }) {
  const c = (x1 + x2) / 2;
  return <path d={`M${x1} ${y1}C${c} ${y1} ${c} ${y2} ${x2} ${y2}`} fill="none" stroke={stroke} strokeWidth={width} strokeOpacity=".75" strokeDasharray={dash} />;
}

// Boxes are given by their corners: left, top, right, bottom
function Box({ at: [l, t, r, b], fill = "#8b8b99", stroke = INK, width = 1, rx }) {
  return <rect x={l} y={t} width={r - l} height={b - t} fill={fill} stroke={stroke} strokeWidth={width} rx={rx} />;
}

function Group({ at, fill = "#faf1ec" }) {
  return <Box at={at} fill={fill} stroke="#cbc3bc" width={1.5} />;
}

function Panel({ at, head = 5, fill = "#fffb5c", bar = "#c9c23c", label }) {
  const [l, t, r] = at;
  return (
    <g>
      <Box at={at} fill={fill} />
      <Box at={[l, t, r, t + head]} fill={bar} />
      {label && <text x={(l + r) / 2} y={t + head - 1} textAnchor="middle" className={TINY}>{label}</text>}
    </g>
  );
}

function Canvas() {
  return (
    <main className="relative min-h-0 flex-1 overflow-hidden border-l border-[#777] bg-[#f1f1f1]">
      <svg className="block h-full w-full font-['Open_Sans',sans-serif]">
        {/* canvas origin */}
        <g transform="translate(-589 -223)">
          <path d="M1553.500 1100V437.500H2400V1100z" fill="#fafafa" stroke="#000" strokeWidth="1.500" />
          <FeedbackArea />
          <g transform="translate(1060 620) scale(.3333)"><RecorderTable /></g>
          <DatasetArea />
          <ViewportPanel />
          <UnitArea />
        </g>
      </svg>
      <div className="absolute top-px right-[2px] flex gap-1 border border-black bg-linear-to-r from-[#666] to-[#ccc] py-px pr-px pl-[6px]">
        {[
          ["Timer", <Tile key="t"><path d="M17 7a7 7 0 1 1-10 0" stroke="#222" strokeWidth="3" /><path d="m7 5 5 7" stroke="#222" strokeWidth="3" /></Tile>],
          ["Button", INPUT[0][0][1]],
          ["Scribble", INPUT[0][1][1]],
        ].map(([name, art]) => (
          <button key={name} aria-label={name}><svg width="24" height="24" viewBox="0 0 24 24" fill="none">{art}</svg></button>
        ))}
      </div>
      <svg width="50" height="52" viewBox="0 0 50 52" className="absolute right-[6px] bottom-[5px]" fill="none">
        <defs>
          <radialGradient id="ball"><stop offset="0" stopColor="#eee" /><stop offset="1" stopColor="#a0a0a0" /></radialGradient>
        </defs>
        <circle cx="25" cy="28" r="20" fill="#fff" stroke="#222" />
        <circle cx="25" cy="28" r="18" fill="url(#ball)" stroke="#666" />
        <path d="M4 27A21 21 0 0 1 13 11M15 10A21.500 21.500 0 0 1 37 45" stroke="#000" strokeWidth="3" />
        <path d="m8 1 7 4-1 7-6-4z" fill="#000" />
        <path d="m14 13 6 2-3 4zM40 16l-2 7-4-4zM12 36l3 5-5 1zM33 41l5 2-4 5z" fill="#fff" />
      </svg>
    </main>
  );
}

function DatasetArea() {
  return (
    <g>
      <Panel at={[765, 359, 780, 369]} />
      <Box at={[783, 361, 807, 369]} />
      <Group at={[774, 385, 1050, 467]} />
      <Box at={[776.5, 388, 964, 466]} fill="#fff" width={1.5} />
      <Box at={[968.5, 388, 1048, 465]} fill="#fff" width={1.5} />
      <text x="866" y="435" textAnchor="middle" className="font-['Lato',sans-serif] text-[26px] font-bold">READ ME</text>

      <Group at={[783, 480, 1075, 628]} />
      <Group at={[904, 486, 1073, 626]} fill="#fcf5dc" />
      <text x="792" y="491" className="[font-family:'Liberation_Sans',sans-serif] text-[9px]">1. Load floor plan dataset</text>
      <Group at={[785, 523, 865, 562]} fill="#fcecc9" />
      <rect x="793" y="527" width="49" height="14" fill="#c4b894" />
      <text className="fill-[#7d7258] text-[6px] font-semibold"><tspan x="793" y="532">Right-click,</tspan><tspan x="793" y="539">Change file path</tspan></text>
      <Group at={[791, 564, 841, 580]} />

      <path d="M1110 410C1142 410 1165 442 1165 470 1165 508 1137 537 1106 537 1078 537 1056 508 1056 480 1056 440 1080 410 1110 410z" fill="#fbd4b0" fillOpacity=".9" stroke="#bfa890" />
      <path d="M1125 533C1150 533 1160 560 1160 580 1160 602 1145 618 1128 618 1110 618 1098 600 1098 575 1098 550 1108 533 1125 533z" fill="#f8c090" fillOpacity=".9" stroke="#bb8a60" />
      <ellipse cx="1129" cy="589" rx="27" ry="29" fill="#f8be8a" stroke="#cf9a6a" />

      <Wire from={[861, 516]} to={[907, 545]} />
      <Wire from={[860, 555]} to={[907, 549]} />
      <Wire from={[839, 572]} to={[907, 554]} />
      <Wire from={[860, 555]} to={[910, 610]} />
      <Wire from={[940, 553]} to={[955, 522]} />
      <Wire from={[975, 517]} to={[1033, 541]} />
      <Wire from={[975, 527]} to={[1034, 562]} />
      <Wire from={[975, 532]} to={[1034, 584]} />
      <Wire from={[975, 537]} to={[1031, 608]} />
      <path d="M940 553C1010 553 1060 548 1168 534M975 517C1050 517 1090 513 1168 507M1223 524h4M1223 499l4-1" fill="none" stroke="#444" />
      <Box at={[832, 513, 861, 519]} />
      <Box at={[848, 513, 861, 519]} fill="#222" />
      <Box at={[790, 552, 860, 557]} />
      <Panel at={[793, 567, 839, 578]} />
      <Box at={[907, 541, 940, 558]} fill="#c8c6c6" />
      <Box at={[955, 489, 975, 556]} fill="#c8c6c6" />
      <Box at={[1033, 531, 1066, 552]} fill="#fffb5c" />
      <Box at={[1034, 553, 1067, 573]} fill="#fffb5c" />
      <Box at={[1034, 575, 1068, 594]} fill="#fffb5c" />
      <Box at={[1031, 598, 1070, 619]} fill="#fffb5c" />
      <Panel at={[910, 598, 1006, 623]} />

      <text x="1077" y="457" className="fill-[#3a2a20] text-[7px]">2. Isovist Grid Settings</text>
      <Box at={[1078, 459, 1145, 476]} fill="#33312f" />
      {[[477, 1111, 1142], [483, 1108, 1138], [489, 1098, 1130], [495, 1097, 1130]].map(([y, m, r]) => (
        <g key={y}><Box at={[1078, y, r, y + 5]} fill="#c8c6c6" /><Box at={[1078, y, m, y + 5]} /></g>
      ))}
      <rect x="1105" y="553" width="44" height="15" fill="#9c7d60" />
      <Panel at={[1113, 573, 1134, 586]} fill="#fff" bar="#c8c6c6" label="unit_id" />
      <Box at={[1112, 587, 1152, 592]} />
      <Box at={[1112, 593, 1139, 598]} />
      <Box at={[1126, 593, 1139, 598]} fill="#222" />
      <path d="M1152 589.500H1230M1545 589.500H1919M1904.500 450V589" stroke="#222" strokeDasharray="2 1" />
      <Panel at={[1168, 429, 1222, 523]} fill="#ffcf58" bar="#c29f45" label="unit_id" />
      <Panel at={[1169, 525, 1223, 623]} fill="#ffcf58" bar="#c29f45" />
    </g>
  );
}

function FeedbackArea() {
  return (
    <g>
      <Group at={[769, 636, 1414, 886]} />
      <path
        d="M803 645C830 645 846 668 846 693 846 735 815 740 798 754Q796 756 800 760L821 779Q825 783 829 777C842 758 850 743 872 743 893 743 908 758 909 778Q910 783 912 781C920 772 927 773 941 773 946 768 948 762 952 762 957 762 960 769 970 769.500L982 769.500C990 769.500 994 775 994 783 994 790 990 795 982 795 970 796 962 794 957 797 950 800 946 797 940 793 925 794 918 793 911 784Q909 781 908 785C904 805 893 818 871 818 850 818 840 802 829 792Q825 788 821 794C815 808 810 823 781 823 760 823 749 810 749 795 749 770 775 765 787 757Q790 755 788 752C778 742 755 725 755 697 755 665 778 645 803 645z"
        fill="#e8deb2" stroke="#b3ab8c"
      />
      <path d="M950 654C975 654 988 680 988 706 988 732 965 757 950 757 935 757 911 735 911 706 911 680 925 654 950 654z" fill="#e8deb2" stroke="#b3ab8c" />
      <Box at={[772, 667, 835, 699]} fill="#33312f" />
      <Box at={[773, 699, 825, 705]} /><Box at={[822, 699, 825, 705]} />
      <Box at={[772, 706, 825, 712]} /><Box at={[822, 706, 825, 712]} />
      <rect x="920" y="685" width="62" height="7" fill="#c4bb95" />
      <text x="951" y="691" textAnchor="middle" className="fill-[#6d6750] text-[6px] font-semibold">Warnings / Feedback</text>
      <Panel at={[929, 702, 971, 714]} fill="#fff" bar="#c8c6c6" />
      <Panel at={[928, 717, 970, 743]} fill="#ff5a5a" bar="#b93a3f" />
      <Group at={[756, 785, 821, 801]} fill="#f3e8cf" />
      <Wire from={[818, 791]} to={[853, 788]} />
      <Wire from={[893, 783]} to={[919, 784]} />
      <Wire from={[933, 784]} to={[943, 784]} />
      <Box at={[759, 794, 788, 799]} fill="#fff" />
      <Box at={[759, 788, 818, 793]} fill="#c8c6c6" /><Box at={[759, 788, 788, 793]} />
      <rect x="846" y="776" width="53" height="3" fill="#a8a27f" />
      <Box at={[848, 780, 893, 785]} fill="#c8c6c6" />
      <Box at={[853, 786, 886, 791]} fill="#c8c6c6" />
      <Box at={[919, 781, 933, 786]} fill="#c8c6c6" />
      <Panel at={[943, 776, 963, 791]} fill="#fff" bar="#c8c6c6" label="unit_id" />
      <Box at={[971, 781, 991, 785]} rx={2} width={2} />
    </g>
  );
}

// One line per recorder. y of each of the seven nodes, then right edges of the
// first node, the copy and the archive; "g" marks the idle rows
const RECORDERS = [
  [[181, 181, 199, 213, 209, 203, 200], 254, 989, 1292, "g"],
  [[217, 217, 237, 257, 253, 247, 244], 296, 959, 1262, "g"],
  [[250, 250, 272, 300, 297, 290, 288], 302, 995, 1299],
  [[286, 285, 306, 343, 340, 333, 331], 301, 996, 1300],
  [[325, 325, 345, 386, 384, 377, 375], 301, 997, 1300],
  [[376, 375, 393, 429, 428, 420, 419], 301, 1034, 1337],
  [[418, 417, 437, 473, 471, 464, 462], 314, 1049, 1352, "g"],
  [[468, 467, 489, 516, 515, 507, 506], 310, 1005, 1309],
  [[511, 511, 534, 560, 558, 550, 549], 310, 1005, 1309],
  [[555, 554, 577, 604, 602, 594, 593], 310, 1005, 1309],
  [[598, 595, 615, 647, 646, 637, 637], 310, 1005, 1309],
  [[640, 638, 657, 690, 690, 681, 680], 310, 1005, 1309],
  [[692, 688, 708, 734, 733, 725, 724], 310, 1005, 1309],
  [[746, 745, 763, 777, 777, 768, 768], 296, 1028, 1332],
];

function RecorderTable() {
  return (
    <g>
      <path d="M291-54C204-54 156-30 114 60 75 135 55 225 55 300L58 690C66 840 180 943 315 943 465 943 540 795 561 720 576 630 580 510 578 330 573 180 516 60 450 3 405-36 345-54 291-54z" fill="#fcf2ec" stroke="#bfb8b2" strokeWidth="3" />
      <path d="M0 47H578M0 799H534" stroke="#e9dfd7" strokeWidth="4" />
      <path d="M198 132C150 132 141 195 141 240 135 360 135 540 141 660 147 765 180 818 234 818 300 818 324 750 336 675 348 540 351 360 336 240 330 200 300 150 270 135z" fill="#fec48d" stroke="#d8a878" strokeWidth="3" />
      <g fill="#fdf0dc" fillOpacity=".35" stroke="#b8aa9c" strokeOpacity=".5" strokeWidth="4">
        {RECORDERS.map(([[y]]) => <rect key={y} x="162" y={y - 23} width="311" height="47" />)}
      </g>
      <g fill="#fdf0de" fillOpacity=".6" stroke="#c6beb7" strokeWidth="4">
        <rect x="585" y="112" width="98" height="669" />
        <rect x="777" y="125" width="279" height="668" />
        <rect x="1081" y="115" width="277" height="668" fill="#faf1ec" fillOpacity="1" />
      </g>
      <rect x="185" y="67" width="145" height="15" fill="#c9bdb2" />
      <text x="186" y="81" className="fill-[#776c64] text-[18px] font-semibold">3. data recorders</text>
      <Box at={[184, 82, 374, 142]} fill="#33312f" />
      <Box at={[613, 118, 671, 179]} fill="#33312f" />
      {[[788, 137], [1091, 127]].map(([x, y]) => (
        <g key={x} className="text-[18px] font-semibold">
          <rect x={x} y={y} width="138" height="39" fill="#c4bab2" />
          <text x={x} y={y + 15} fill="#756c66">Copy Name</text>
          <text x={x} y={y + 35} fill="#756c66">Day Month Year</text>
        </g>
      ))}
      <g>
        {RECORDERS.map(([y, a, e, g, idle], i) => {
          const stroke = idle ? INK : "#e0431c";
          const w = (x1, y1, x2, y2) => <Wire from={[x1, y1]} to={[x2, y2]} stroke={stroke} width={3} />;
          return (
            <g key={i}>
              {w(a, y[0], 352, y[1])}{w(467, y[1], 606, y[2])}{w(672, y[2], 797, y[3])}
              {w(672, y[2], 1099, y[5])}{w(851, y[3], 882, y[4])}{w(1155, y[5], 1184, y[6])}
            </g>
          );
        })}
        <Wire from={[467, 688]} to={[797, 734]} stroke="#e0431c" width={3} />
        <Wire from={[467, 688]} to={[1099, 725]} stroke="#e0431c" width={3} />
      </g>
      {RECORDERS.map(([y, a, e, g, idle], i) => {
        const fill = idle ? "#c8c6c6" : "#ff8c1a";
        const stroke = idle ? INK : "#5f1508";
        const node = (l, c, r, h, f = fill) => <Box at={[l, c - h, r, c + h]} fill={f} stroke={stroke} width={4} />;
        return (
          <g key={i}>
            {node(175, y[0], a, 9)}
            {node(352, y[1], 467, 8)}
            {node(608, y[2], 673, 11, idle ? "#8b8b99" : fill)}
            {node(797, y[3], 851, 8)}
            {node(882, y[4], e, 8)}
            {node(1100, y[5], 1154, 8)}
            {node(1184, y[6], g, 8)}
          </g>
        );
      })}
      <Box at={[1081, 788, 1214, 881]} fill="#ffcf58" width={4} />
      <Box at={[1081, 788, 1214, 803]} fill="#c29f45" width={4} />
      <text x="1147" y="800" textAnchor="middle" className="text-[12px]">Copy Data</text>
    </g>
  );
}

function ViewportPanel() {
  return (
    <g>
      <Box at={[1227, 421, 1544, 631]} fill="#fff" width={1.5} />
      <Box at={[1227, 421, 1544, 427]} />
      <path d="M1390.500 428V508" stroke="#a8d4a8" strokeWidth="1.500" />
      <path d="M1390.500 508H1543" stroke="#e0b4bc" strokeWidth="1.500" />
      <path d="m1293 510 156-49 27 86-156 49z" fill="none" stroke="#82cc86" />
      <g transform="translate(1390.500 508) scale(.1018)"><FloorPlan /></g>
      <path d="M1236.500 613V620.500H1243" fill="none" stroke="#bbb" />
    </g>
  );
}

function UnitArea() {
  const wires = [
    [1578, 387, 1622, 400], [1653, 400, 1676, 422], [1600, 428, 1633, 424], [1622, 431, 1633, 429], [1650, 429, 1676, 418],
    [1693, 422, 1711, 408], [1728, 408, 1749, 429], [1775, 427, 1785, 407], [1806, 402, 1816, 424], [1840, 424, 1930, 431], [1840, 424, 1930, 433],
  ];
  return (
    <g>
      <Group at={[1575, 358, 1888, 443]} />
      <Group at={[1578, 369, 1731, 440]} fill="#fcf5dc" />
      <Group at={[1742, 361, 1886, 435]} fill="#fcf5dc" />
      <Group at={[1898, 337, 1930, 455]} />
      <Group at={[1901, 358, 1930, 395]} fill="#fcf5dc" />
      <Group at={[1908, 397, 1930, 426]} />
      <g className="fill-[#3a372c] text-[6px] font-semibold">
        <text x="1584" y="379">SELECTING UNIT ID FOR TESTING</text>
        <text x="1746" y="371">1 UNIT ID SELECTED TO ISOLATE GEOMETRY</text>
      </g>
      <text x="1903" y="346" className="fill-[#777] text-[6px] font-bold">CON</text>
      <path d="M1553 437.500H1902" stroke="#222" />
      <path d="M1578 387C1700 387 1790 394 1930 397M1544 423C1600 410 1640 404 1711 403.500L1785 401M1544 440C1600 435 1660 433 1711 433" fill="none" stroke="#444" />
      {wires.map(([a, b, c, d], i) => <Wire key={i} from={[a, b]} to={[c, d]} />)}
      <path d="M1919 609C1840 735 1785 810 1785 872 1786 920 1830 939 1904 939M1906 1034 1919 998" fill="none" stroke="#555" />
      <Box at={[1558, 384, 1578, 390]} fill="#c8c6c6" />
      <Box at={[1622, 398, 1654, 402]} rx={1} width={1.5} />
      <Panel at={[1711, 399, 1729, 417]} />
      <Box at={[1583, 424, 1600, 436]} />
      <Box at={[1614, 428, 1622, 434]} fill="#fffb5c" />
      <Box at={[1633, 421, 1650, 437]} />
      <Box at={[1676, 414, 1693, 430]} />
      <Box at={[1710, 431, 1734, 435]} rx={1} width={1.5} />
      <Box at={[1749, 421, 1775, 433]} />
      <Box at={[1785, 399, 1806, 411]} />
      <Box at={[1816, 422, 1840, 427]} />
      <Box at={[1905, 361, 1930, 367]} fill="#fff" />
      <Box at={[1904, 370, 1930, 376]} />
      <Box at={[1906, 386, 1930, 391]} />
      <Box at={[1910, 404, 1930, 410]} fill="#fff" />
      <Box at={[1910, 417, 1930, 423]} fill="#fff" />
      <Box at={[1904, 433, 1930, 439]} />
      <Box at={[1903, 443, 1930, 448]} />
      <Box at={[1904, 907, 1930, 973]} fill="#c8c6c6" />
    </g>
  );
}
